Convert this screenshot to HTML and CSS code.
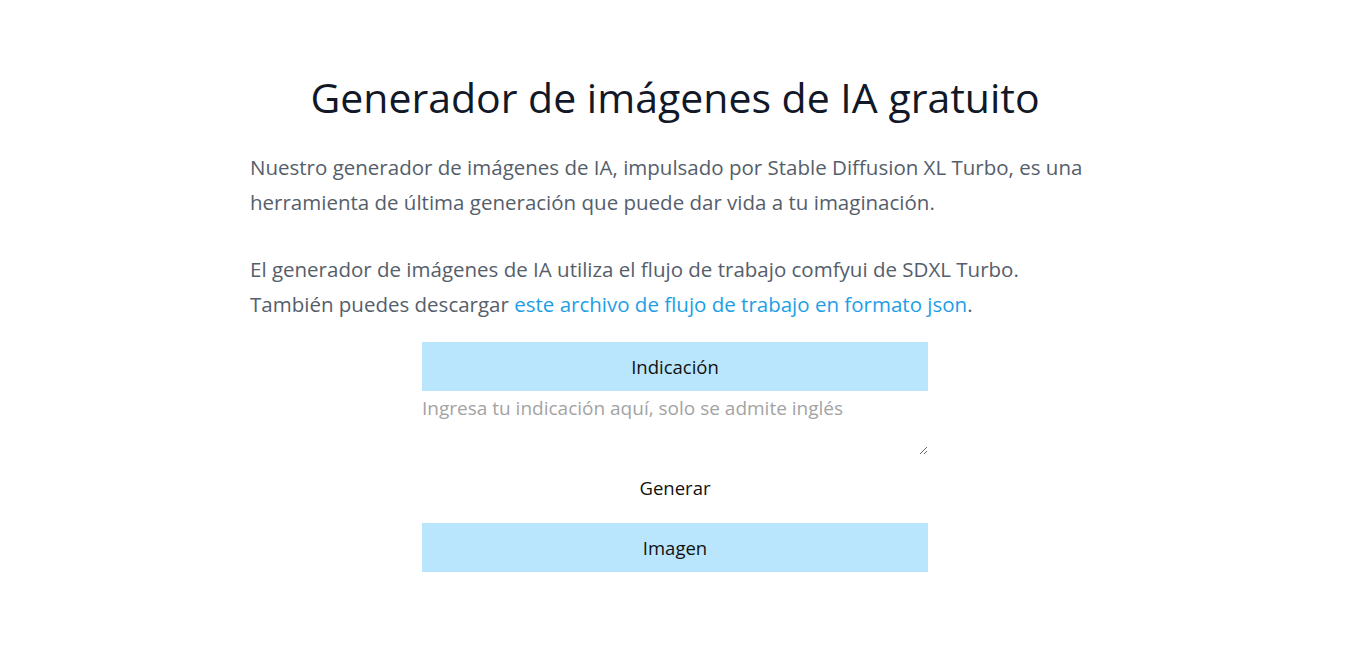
FILE: index.html
```html
<!DOCTYPE html>
<html lang="es">
<head>
    <meta charset="UTF-8">
    <meta name="viewport" content="width=device-width, initial-scale=1.0">
    <title>Generador de imágenes de IA gratuito</title>
    <link rel="stylesheet" href="styles.css">
</head>
<body>
    <main class="page">
        <h1 class="title">Generador de imágenes de IA gratuito</h1>

        <p class="intro">Nuestro generador de imágenes de IA, impulsado por Stable Diffusion XL Turbo, es una herramienta de última generación que puede dar vida a tu imaginación.</p>

        <p class="intro">El generador de imágenes de IA utiliza el flujo de trabajo comfyui de SDXL Turbo.<br>También puedes descargar <a href="#" class="link">este archivo de flujo de trabajo en formato json</a>.</p>

        <section class="tool">
            <div class="bar">Indicación</div>
            <textarea class="prompt" placeholder="Ingresa tu indicación aquí, solo se admite inglés"></textarea>
            <button class="generate">Generar</button>
            <div class="bar">Imagen</div>
        </section>
    </main>
</body>
</html>
```

FILE: styles.css
```css
body {
    margin: 0;
    padding-right: 16px;
    background: #ffffff;
    font-family: "Open Sans", "Noto Sans", sans-serif;
}
.page {
    max-width: 850px;
    margin: 0 auto;
    padding-top: 66px;
}
.title {
    margin: 0 0 22px;
    text-align: center;
    font-size: 41px;
    font-weight: 400;
    line-height: 62px;
    color: #111827;
}
.intro {
    margin: 0 0 32px;
    font-size: 20.5px;
    line-height: 35px;
    color: #555e6b;
}
.intro:last-of-type {
    margin-bottom: 20px;
}
.link {
    color: #1e9ee6;
    text-decoration: none;
}
.tool {
    width: 506px;
    margin: 0 auto;
    display: flex;
    flex-direction: column;
}
.bar {
    height: 49px;
    background: #bae6fd;
    color: #111111;
    font-size: 18.5px;
    display: flex;
    align-items: center;
    justify-content: center;
}
.prompt {
    height: 60px;
    margin: 0;
    padding: 4px 0 0;
    border: none;
    outline: none;
    font-family: inherit;
    font-size: 19px;
    color: #111111;
    resize: vertical;
}
.prompt::placeholder {
    color: #a3a3a3;
}
.generate {
    align-self: center;
    margin: 12px 0 15px;
    padding: 8px 16px;
    border: none;
    background: none;
    font-family: inherit;
    font-size: 18.5px;
    color: #111111;
    cursor: pointer;
}
```
